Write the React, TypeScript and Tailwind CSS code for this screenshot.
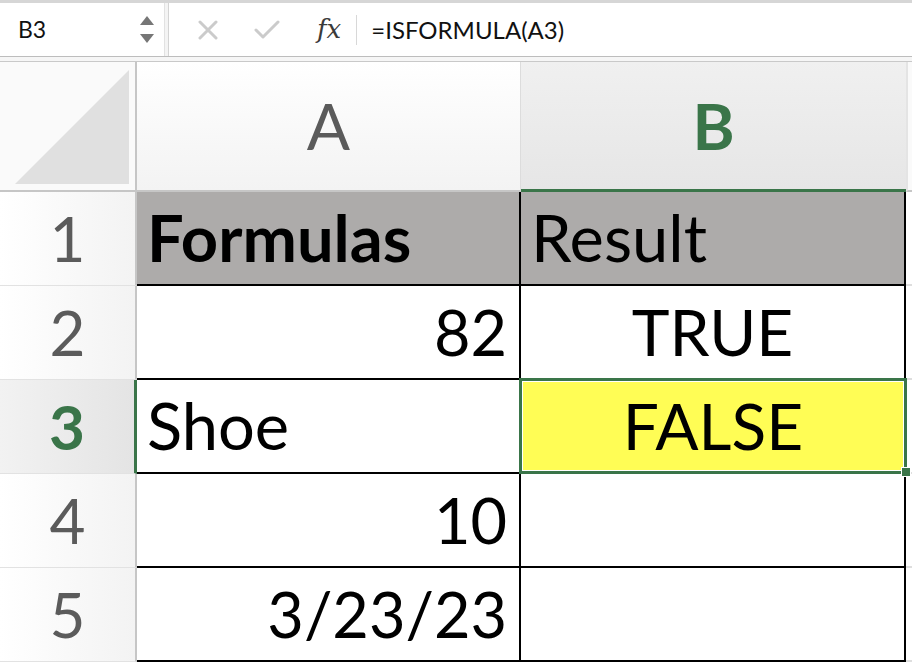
import React from "react";

const FONT = { fontFamily: "Lato, 'Open Sans', sans-serif" };

type Cell = { text: string; align: "left" | "right" | "center"; bold?: boolean };

const rows: { num: number; a: Cell; b: Cell }[] = [
  { num: 1, a: { text: "Formulas", align: "left", bold: true }, b: { text: "Result", align: "left" } },
  { num: 2, a: { text: "82", align: "right" }, b: { text: "TRUE", align: "center" } },
  { num: 3, a: { text: "Shoe", align: "left" }, b: { text: "FALSE", align: "center" } },
  { num: 4, a: { text: "10", align: "right" }, b: { text: "", align: "center" } },
  { num: 5, a: { text: "3/23/23", align: "right" }, b: { text: "", align: "center" } },
];

// numbers sit right-aligned and a touch narrower than text
const alignClass = {
  left: "justify-start pl-[10px] text-[65px]",
  right: "justify-end pr-[12px] text-[63px]",
  center: "justify-center text-[64px]",
};

function FormulaBar() {
  return (
    <div className="flex h-[57px] border-t-[3px] border-[#d6d6d6] border-b border-b-[#bdbdbd] bg-white">
      {/* name box */}
      <div className="flex w-[165px] items-center justify-between border-r border-[#e2e2e2] pl-[18px] pr-[10px]">
        <span className="text-[23px] text-[#111]">B3</span>
        <div className="flex flex-col items-center gap-[9px]">
          <svg width="14" height="9" viewBox="0 0 14 9">
            <path d="M7 0 L14 9 L0 9 Z" fill="#767676" />
          </svg>
          <svg width="14" height="9" viewBox="0 0 14 9">
            <path d="M0 0 L14 0 L7 9 Z" fill="#767676" />
          </svg>
        </div>
      </div>
      <div className="w-[3px] bg-[#f4f4f4]" />
      <div className="flex flex-1 items-center border-l border-[#d4d4d4]">
        <svg className="ml-[29px]" width="20" height="20" viewBox="0 0 20 20">
          <path d="M2 2 L18 18 M18 2 L2 18" stroke="#cbcbcb" strokeWidth="3" strokeLinecap="round" />
        </svg>
        <svg className="ml-[36px]" width="26" height="20" viewBox="0 0 26 20">
          <path d="M2 10 L9 17 L24 2" stroke="#cbcbcb" strokeWidth="3" fill="none" strokeLinecap="round" strokeLinejoin="round" />
        </svg>
        <span
          className="ml-[37px] text-[26px] italic text-[#3a3a3a]"
          style={{ fontFamily: "'DejaVu Serif', 'Liberation Serif', serif" }}
        >
          fx
        </span>
        <div className="ml-[15px] h-[30px] w-px bg-[#d8d8d8]" />
        <span className="ml-[14px] text-[24px] text-[#111]">=ISFORMULA(A3)</span>
      </div>
    </div>
  );
}

export default function App() {
  return (
    <div className="h-[664px] w-[912px] overflow-hidden bg-white" style={FONT}>
      <FormulaBar />
      <div className="h-[5px] border-b border-[#c9c9c9] bg-[#f6f6f6]" />

      <div className="relative grid grid-cols-[137px_384px_385px_1fr] grid-rows-[130px_repeat(5,94px)]">
        {/* corner */}
        <div className="flex items-end justify-end border-r-2 border-b-2 border-[#c6c6c6] bg-[#fafafa] pr-[4px] pb-[4px]">
          <svg width="118" height="118" viewBox="0 0 118 118">
            <path d="M116 2 L116 116 L2 116 Z" fill="#e0e0e0" />
          </svg>
        </div>
        {/* column headers */}
        <div className="flex items-center justify-center border-r border-b-2 border-r-[#dcdcdc] border-b-[#c6c6c6] bg-gradient-to-b from-white to-[#f3f3f3] text-[64px] text-[#5b5b5b]">
          A
        </div>
        <div className="flex items-center justify-center border-b-[3px] border-[#3a7549] bg-gradient-to-b from-[#f0f0f0] to-[#e6e6e6] text-[64px] font-bold text-[#3a7549]">
          B
        </div>
        <div className="border-l-2 border-b-2 border-l-[#e4e4e4] border-b-[#c6c6c6] bg-[#fafafa]" />

        {rows.map((r) => {
          const active = r.num === 3;
          return (
            <React.Fragment key={r.num}>
              <div
                className={
                  active
                    ? "flex items-center justify-center border-r-[3px] border-b border-r-[#3a7549] border-b-[#e2e2e2] bg-gradient-to-r from-[#f2f2f2] to-[#e4e4e4] text-[62px] font-bold text-[#3a7549]"
                    : "flex items-center justify-center border-r-2 border-b border-r-[#c6c6c6] border-b-[#e2e2e2] bg-gradient-to-r from-white to-[#f3f3f3] text-[62px] text-[#5b5b5b]"
                }
              >
                {r.num}
              </div>
              {[r.a, r.b].map((c, i) => (
                <div
                  key={i}
                  className={`flex items-center border-r-2 border-b-2 border-black text-black ${
                    alignClass[c.align]
                  } ${r.num === 1 ? "bg-[#adabaa]" : "bg-white"} ${c.bold ? "font-bold" : ""}`}
                >
                  {c.text}
                </div>
              ))}
              <div className="border-b-2 border-[#dedede] bg-white" />
            </React.Fragment>
          );
        })}

        {/* active cell B3 */}
        <div className="absolute left-[519px] top-[316px] flex h-[96px] w-[388px] items-center justify-center border-[3px] border-[#3a7549] bg-[#fffd55] text-[64px] text-black outline outline-1 -outline-offset-[4px] outline-white">
          FALSE
        </div>
        <div className="absolute left-[901px] top-[405px] h-[10px] w-[10px] border border-white bg-[#3a7549]" />
      </div>
    </div>
  );
}
